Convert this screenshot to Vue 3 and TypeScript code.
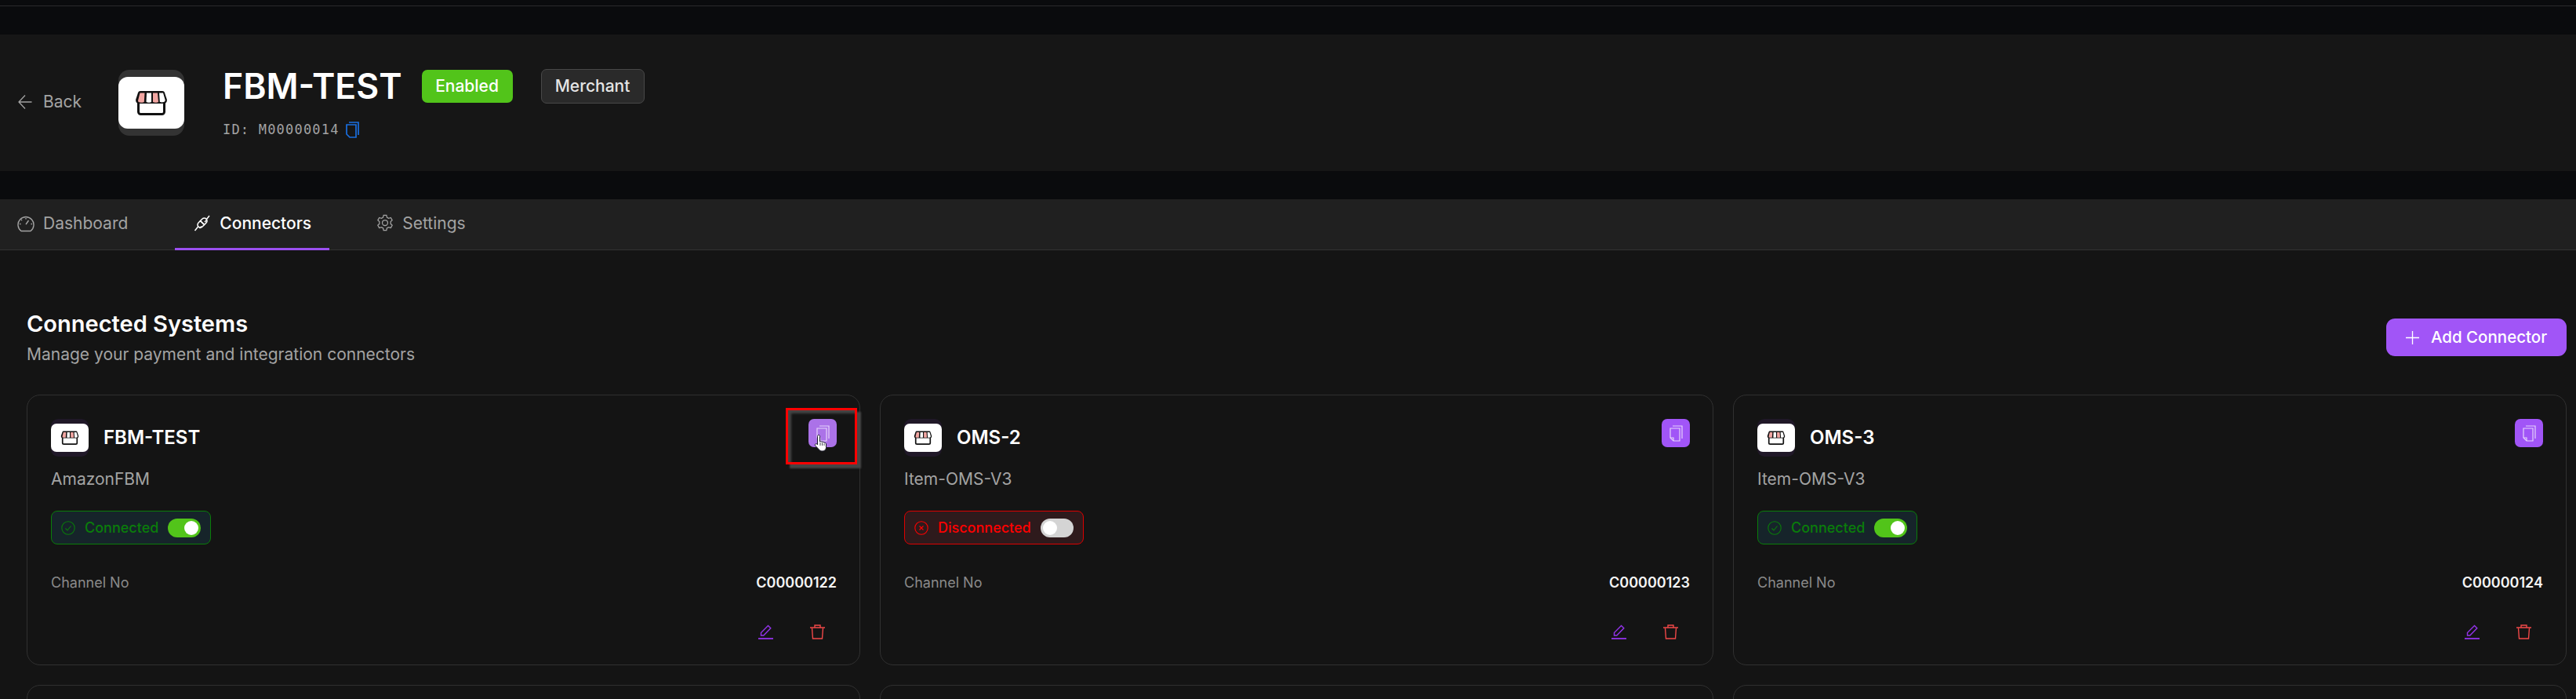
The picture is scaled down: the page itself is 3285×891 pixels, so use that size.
<script setup lang="ts">
interface Connector {
  name: string
  type: string
  connected: boolean
  channel: string
  hovered?: boolean
}

const connectors: Connector[] = [
  { name: 'FBM-TEST', type: 'AmazonFBM', connected: true, channel: 'C00000122', hovered: true },
  { name: 'OMS-2', type: 'Item-OMS-V3', connected: false, channel: 'C00000123' },
  { name: 'OMS-3', type: 'Item-OMS-V3', connected: true, channel: 'C00000124' },
]
</script>

<template>
  <div class="page">
    <div class="topband"><div class="topline"></div></div>

    <header class="header">
      <button class="back">
        <svg class="back-icon" viewBox="0 0 18 20" fill="none" stroke="currentColor" stroke-width="1.3">
          <path d="M17.5 10H1M9 1.5 1 10l8 8.500" />
        </svg>
        <span>Back</span>
      </button>
      <div class="logo logo-lg">
        <div class="logo-inner">
          <svg class="store store-lg" viewBox="0 0 42 32">
            <path d="M4.500 13v14.500a3 3 0 0 0 3 3h27a3 3 0 0 0 3-3V13Z" fill="#fff" stroke="#111" stroke-width="3" />
            <path d="M7 1h28c1.500 0 2.500.8 3 2.200l2.800 8.500c.7 3-1.500 5.300-4 5.300H5.200c-2.500 0-4.700-2.300-4-5.300L4 3.200C4.500 1.800 5.500 1 7 1Z" fill="#111" />
            <path d="M6.500 3.500h6l-.7 11.500c-.8 1-5.500 1-7 0-.7-.5-.9-1.500-.6-2.500Z" fill="#f2a6a2" />
            <path d="M15 3.500h6v11.500c-1 1-5 1-6.500 0Z" fill="#fff" />
            <path d="M23 3.500h6l1 11.500c-1 1-5.500 1-7 0Z" fill="#f2a6a2" />
            <path d="M31 3.500h5l2.500 8.500c.4 1.500-.3 2.700-1.500 3-1.500.5-4.500.5-5.200 0Z" fill="#fff" />
          </svg>
        </div>
      </div>
      <div class="identity">
        <div class="title-row">
          <h1 class="title">FBM-TEST</h1>
          <span class="badge-enabled">Enabled</span>
          <span class="badge-merchant">Merchant</span>
        </div>
        <div class="id-row">
          <span class="id-text">ID: M00000014</span>
          <svg class="id-copy" viewBox="0 0 17 21" fill="none" stroke="#1a6fe0" stroke-width="1.700">
            <path d="M1 4h12v16H5l-4-4Z" />
            <path d="M4 1h12v16" />
          </svg>
        </div>
      </div>
    </header>

    <div class="gapband"></div>

    <nav class="tabs">
      <a class="tab">
        <svg class="tab-icon" viewBox="0 0 22 24" fill="none" stroke="currentColor" stroke-width="1.400">
          <path d="M5 22.500a10 10 0 1 1 12 0Z" />
          <path d="m11 14 3.500-5M11 6v1.500M5 8l1 1M3 13.500h1.500M19 13.500h-1.500" />
        </svg>
        Dashboard
      </a>
      <a class="tab tab-active">
        <svg class="tab-icon" viewBox="0 0 22 24" fill="none" stroke="currentColor" stroke-width="1.500">
          <path d="m8.500 9.500 5 5-2.500 2.500a3.500 3.500 0 0 1-5-5Z" />
          <path d="m13.500 14.500-5-5L11 7a3.500 3.500 0 0 1 5 5Z" />
          <path d="M16 8l4-5M5.500 17l-4 5M10 16.500 7.500 19M14 11l2.500-2.500" />
        </svg>
        Connectors
      </a>
      <a class="tab">
        <svg class="tab-icon" viewBox="0 0 24 24" fill="none" stroke="currentColor" stroke-width="1.400">
          <path d="m10 1.500 4 0 .7 3 2.300 1.300 3-.9 2 3.500-2.200 2.100v2.900l2.200 2.100-2 3.500-3-.9-2.300 1.300-.7 3h-4l-.7-3L7 18.100l-3 .9-2-3.500 2.200-2.100v-2.900L2 8.400l2-3.500 3 .9 2.300-1.300Z" />
          <circle cx="12" cy="12" r="3.800" />
        </svg>
        Settings
      </a>
    </nav>

    <main class="content">
      <div class="section-head">
        <div>
          <h2 class="section-title">Connected Systems</h2>
          <p class="section-sub">Manage your payment and integration connectors</p>
        </div>
        <button class="add">
          <svg class="add-icon" viewBox="0 0 18 18" fill="none" stroke="#fff" stroke-width="1.400">
            <path d="M9 0v18M0 9h18" />
          </svg>
          Add Connector
        </button>
      </div>

      <div class="grid">
        <article v-for="c in connectors" :key="c.channel" class="card">
          <div class="card-head">
            <div class="logo logo-sm">
              <div class="logo-inner">
                <svg class="store store-sm" viewBox="0 0 42 32">
                  <path d="M4.500 13v14.500a3 3 0 0 0 3 3h27a3 3 0 0 0 3-3V13Z" fill="#fff" stroke="#111" stroke-width="3" />
                  <path d="M7 1h28c1.500 0 2.500.8 3 2.200l2.800 8.500c.7 3-1.500 5.300-4 5.300H5.200c-2.500 0-4.700-2.300-4-5.300L4 3.200C4.500 1.800 5.500 1 7 1Z" fill="#111" />
                  <path d="M6.500 3.500h6l-.7 11.500c-.8 1-5.500 1-7 0-.7-.5-.9-1.500-.6-2.500Z" fill="#f2a6a2" />
                  <path d="M15 3.500h6v11.500c-1 1-5 1-6.500 0Z" fill="#fff" />
                  <path d="M23 3.500h6l1 11.500c-1 1-5.500 1-7 0Z" fill="#f2a6a2" />
                  <path d="M31 3.500h5l2.500 8.500c.4 1.500-.3 2.700-1.500 3-1.500.5-4.500.5-5.200 0Z" fill="#fff" />
                </svg>
              </div>
            </div>
            <h3 class="card-name">{{ c.name }}</h3>
            <button class="copy" :class="{ 'copy-hover': c.hovered }">
              <svg class="copy-icon" viewBox="0 0 17 21" fill="none" stroke="#e6d3fb" stroke-width="1.200">
                <path d="M1 4h12v16H5l-4-4Z" />
                <path d="M1 16h4v4" />
                <path d="M4 1h12v16" />
              </svg>
            </button>
            <template v-if="c.hovered">
              <div class="annotation"></div>
              <svg class="cursor" viewBox="0 0 18 24">
                <path d="M6 1.500c1 0 1.500.8 1.500 1.800V10l.5-.3c.8-.4 1.500 0 1.800.6.700-.5 1.700-.2 2 .6.800-.4 1.800 0 2 .8.800-.3 1.700.2 1.700 1.200v4.600c0 2.500-2 4.500-4.500 4.500H10c-1.500 0-2.700-.7-3.500-1.900L1.600 15c-.5-.8-.3-1.700.4-2.100.7-.4 1.500-.2 2 .4l.5.600V3.300C4.500 2.300 5 1.500 6 1.500Z" fill="#fff" stroke="#1a1a2a" stroke-width="1" />
                <path d="M8 11v4M10.500 11.500V15M13 12.500V15" stroke="#1a1a2a" stroke-width=".8" fill="none" />
              </svg>
            </template>
          </div>

          <p class="card-type">{{ c.type }}</p>

          <div class="status" :class="c.connected ? 'status-on' : 'status-off'">
            <svg v-if="c.connected" class="status-icon" viewBox="0 0 18 18" fill="none" stroke="currentColor" stroke-width="1.100">
              <circle cx="9" cy="9" r="8.200" />
              <path d="m5.500 9.500 2.500 2.500 4.500-5.500" />
            </svg>
            <svg v-else class="status-icon" viewBox="0 0 18 18" fill="none" stroke="currentColor" stroke-width="1.100">
              <circle cx="9" cy="9" r="8.200" />
              <path d="m6.500 6.500 5 5M11.500 6.500l-5 5" />
            </svg>
            <span class="status-text">{{ c.connected ? 'Connected' : 'Disconnected' }}</span>
            <span class="toggle" :class="{ 'toggle-on': c.connected }"><span class="knob"></span></span>
          </div>

          <div class="channel-row">
            <span class="channel-label">Channel No</span>
            <span class="channel-value">{{ c.channel }}</span>
          </div>

          <div class="actions">
            <svg class="action" viewBox="0 0 19 19" fill="none" stroke="#9333ea" stroke-width="1.400">
              <path d="M3.500 14V10.500L12.500 1.500l3.300 3.300L6.800 14Z" />
              <path d="M0 18h19" stroke-width="1.800" />
            </svg>
            <svg class="action" viewBox="0 0 19 19" fill="none" stroke="#f04848" stroke-width="1.400">
              <path d="M0 4h19M6 4V1h7v3" />
              <path d="M2.500 4.500 3.500 18h12l1-13.500" />
            </svg>
          </div>
        </article>
        <article class="card"></article>
        <article class="card"></article>
        <article class="card"></article>
      </div>
    </main>
  </div>
</template>

<style>
html,
body {
  margin: 0;
  background: #141414;
  overflow: hidden;
}
</style>

<style scoped>
.page {
  height: 891px;
  overflow: hidden;
  background: #141414;
  font-family: Inter, "Liberation Sans", sans-serif;
  color: #fff;
}

.topband {
  height: 44px;
  background: #0a0b0d;
  box-sizing: border-box;
  padding-top: 7px;
}

.topline {
  height: 1px;
  background: #2a2a2c;
}

.header {
  height: 174px;
  background: #161616;
  display: flex;
  align-items: flex-start;
  box-sizing: border-box;
  padding-left: 23px;
}

.back {
  display: flex;
  align-items: center;
  gap: 14px;
  border: 0;
  padding: 0;
  margin-top: 74px;
  width: 128px;
  background: none;
  color: #a3a3a3;
  font: 400 21px/24px Inter, sans-serif;
}

.back-icon {
  width: 18px;
  height: 20px;
}

.logo {
  background: #333;
  display: flex;
  align-items: center;
  flex: none;
}

.logo-lg {
  width: 84px;
  height: 84px;
  border-radius: 14px;
  margin-top: 45px;
}

.logo-sm {
  width: 48px;
  height: 48px;
  border-radius: 9px;
  background: #201828;
}

.logo-inner {
  width: 100%;
  height: 78.5%;
  background: #fff;
  border-radius: 12px;
  display: flex;
  align-items: center;
  justify-content: center;
}

.logo-sm .logo-inner {
  height: 75%;
  border-radius: 7px;
}

.store-lg {
  width: 42px;
  height: 32px;
}

.store-sm {
  width: 24px;
  height: 18px;
}

.identity {
  margin-left: 49px;
  margin-top: 40px;
}

.title-row {
  display: flex;
  align-items: center;
  height: 52px;
}

.title {
  margin: 0;
  font-size: 44.500px;
  line-height: 52px;
  font-weight: 600;
  letter-spacing: 0;
}

.badge-enabled {
  margin-left: 25px;
  width: 116px;
  height: 42px;
  box-sizing: border-box;
  border-radius: 7px;
  background: #52c41a;
  text-align: center;
  font-size: 21px;
  font-weight: 500;
  line-height: 42px;
}

.badge-merchant {
  margin-left: 36px;
  width: 132px;
  height: 44px;
  box-sizing: border-box;
  border-radius: 7px;
  background: #2a2a2a;
  border: 1px solid #484848;
  color: #e5e5e5;
  text-align: center;
  font-size: 21px;
  font-weight: 500;
  line-height: 42px;
}

.id-row {
  display: flex;
  align-items: center;
  gap: 8px;
  margin-top: 17px;
}

.id-text {
  font-family: "DejaVu Sans Mono", monospace;
  font-size: 17px;
  letter-spacing: 1.200px;
  line-height: 24px;
  color: #a3a3a3;
}

.id-copy {
  width: 17px;
  height: 21px;
}

.gapband {
  height: 36px;
  background: #0a0b0d;
}

.tabs {
  height: 65px;
  box-sizing: border-box;
  background: #202020;
  border-bottom: 1px solid #333;
  display: flex;
  gap: 36px;
  margin-bottom: 0;
  padding-left: 0;
}

.tab {
  display: flex;
  align-items: center;
  gap: 11px;
  padding: 0 24px 5px;
  height: 65px;
  box-sizing: border-box;
  font-size: 21px;
  color: #a3a3a3;
}

.tab:first-child {
  padding-left: 22px;
}

.tab-active {
  color: #fff;
  font-weight: 500;
  border-bottom: 3px solid #9b4ff0;
  padding-bottom: 2px;
  padding-left: 24px;
  padding-right: 23px;
}

.tab-icon {
  width: 22px;
  height: 24px;
}

.content {
  padding: 76px 12px 0 34px;
}

.section-head {
  display: flex;
  justify-content: space-between;
  align-items: flex-start;
  margin-bottom: 38px;
}

.section-title {
  margin: 0;
  font-size: 29px;
  line-height: 36px;
  font-weight: 600;
}

.section-sub {
  margin: 8px 0 0;
  font-size: 21px;
  line-height: 26px;
  color: #a3a3a3;
}

.add {
  margin-top: 11px;
  height: 48px;
  width: 230px;
  border: 0;
  border-radius: 11px;
  background: #a155f7;
  color: #fff;
  display: flex;
  align-items: center;
  justify-content: center;
  gap: 15px;
  font: 500 20.500px/24px Inter, sans-serif;
}

.add-icon {
  width: 17px;
  height: 17px;
}

.grid {
  display: grid;
  grid-template-columns: repeat(3, 1fr);
  gap: 25px;
}

.card {
  height: 345px;
  box-sizing: border-box;
  border: 1px solid #303030;
  border-radius: 17px;
  padding: 30px 29px 0 30px;
}

.card-head {
  position: relative;
  display: flex;
  align-items: center;
  height: 48px;
  gap: 19px;
}

.card-name {
  margin: 0;
  font-size: 24px;
  line-height: 30px;
  font-weight: 600;
  flex: 1;
}

.copy {
  align-self: flex-start;
  width: 36px;
  height: 36px;
  padding: 0;
  border: 0;
  border-radius: 7px;
  background: #a155f7;
  display: flex;
  align-items: center;
  justify-content: center;
}

.copy-hover {
  background: #ab72e8;
}

.copy-icon {
  width: 17px;
  height: 21px;
}

.annotation {
  position: absolute;
  left: 937px;
  top: -14px;
  width: 91px;
  height: 72px;
  box-sizing: border-box;
  border: 3px solid #f00;
  box-shadow: 5px 5px 2px #454545, inset 5px 5px 3px -1px #454545;
}

.cursor {
  position: absolute;
  left: 973px;
  top: 19px;
  width: 18px;
  height: 24px;
}

.card-type {
  margin: 17px 0 0;
  font-size: 21px;
  line-height: 24px;
  color: #a3a3a3;
}

.status {
  margin-top: 28px;
  display: inline-flex;
  align-items: center;
  height: 43px;
  box-sizing: border-box;
  padding: 0 12px;
  border-radius: 8px;
  border: 1px solid;
}

.status-on {
  color: #0a7d0a;
  background: #16242a;
  border-color: #0a7d0a;
}

.status-off {
  color: #f00;
  background: #2e1a1c;
  border-color: #d00;
}

.status-icon {
  width: 18px;
  height: 18px;
  flex: none;
}

.status-text {
  margin: 0 12px;
  font-size: 18px;
  font-weight: 500;
}

.toggle {
  display: block;
  width: 42px;
  height: 24px;
  border-radius: 12px;
  background: #d4d4d4;
  position: relative;
}

.toggle-on {
  background: #52c41a;
}

.knob {
  position: absolute;
  left: 3px;
  top: 3px;
  width: 18px;
  height: 18px;
  border-radius: 50%;
  background: #fff;
}

.toggle-on .knob {
  left: 21px;
}

.channel-row {
  display: flex;
  justify-content: space-between;
  margin-top: 37px;
  line-height: 24px;
}

.channel-label {
  font-size: 18px;
  color: #8a8a8a;
}

.channel-value {
  font-size: 18px;
  font-weight: 600;
  color: #f5f5f5;
}

.actions {
  display: flex;
  justify-content: flex-end;
  gap: 47px;
  margin-top: 41px;
  padding-right: 15px;
}

.action {
  width: 19px;
  height: 19px;
}
</style>
